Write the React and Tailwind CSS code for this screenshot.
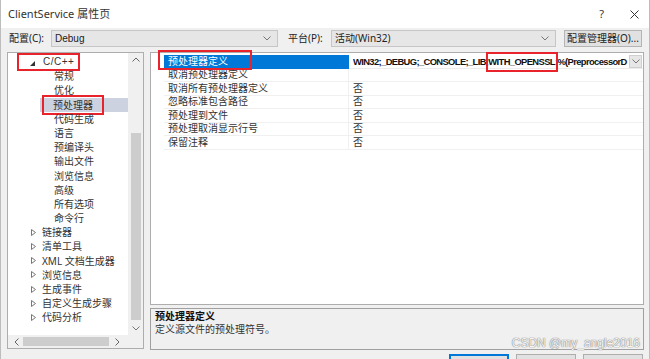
import React from 'react';

const treeChildren = ["常规", "优化", "预处理器", "代码生成", "语言", "预编译头", "输出文件", "浏览信息", "高级", "所有选项", "命令行"];
const treeTop = ["链接器", "清单工具", "XML 文档生成器", "浏览信息", "生成事件", "自定义生成步骤", "代码分析"];

const props = [
  ["取消预处理器定义", ""],
  ["取消所有预处理器定义", "否"],
  ["忽略标准包含路径", "否"],
  ["预处理到文件", "否"],
  ["预处理取消显示行号", "否"],
  ["保留注释", "否"],
];

function Chevron({ className }) {
  return (
    <svg width="8" height="5" viewBox="0 0 8 5" className={className}>
      <path d="M0.5 0.5 L4 4 L7.5 0.5" fill="none" stroke="#777" strokeWidth="1" />
    </svg>
  );
}

export default function App() {
  return (
    <div className="relative w-[650px] h-[359px] overflow-hidden bg-[#f0f0f0] border-x border-[#bdbdbd] text-[#222] font-['Noto_Sans','Noto_Sans_CJK_SC',sans-serif]">
      {/* 标题栏 */}
      <div className="h-[28px] bg-white flex items-center pl-[7px] pr-[10px] text-[11px] text-[#333]">
        <span>ClientService 属性页</span>
        <span className="ml-auto mr-[26px] text-[11px] text-[#333]">?</span>
        <svg width="9" height="9" viewBox="0 0 9 9">
          <path d="M0.5 0.5 L8.5 8.5 M8.5 0.5 L0.5 8.5" stroke="#333" strokeWidth="1" />
        </svg>
      </div>

      {/* 配置行 */}
      <div className="mt-[2px] h-[17px] flex items-center pl-[8px] text-[10px]">
        <span className="w-[42px]">配置(C):</span>
        <div className="w-[227px] h-[17px] bg-[#e6e6e6] border border-[#c6c6c6] flex items-center pl-[3px] pr-[6px]">
          <span className="font-['Liberation_Sans'] text-[10px]">Debug</span>
          <Chevron className="ml-auto" />
        </div>
        <span className="ml-[10px] w-[43px]">平台(P):</span>
        <div className="w-[225px] h-[17px] bg-[#e6e6e6] border border-[#c6c6c6] flex items-center pl-[3px] pr-[6px]">
          <span>活动(Win32)</span>
          <Chevron className="ml-auto" />
        </div>
        <div className="ml-[8px] w-[78px] h-[17px] bg-[#e1e1e1] border border-[#b4b4b4] flex items-center justify-center">
          配置管理器(O)...
        </div>
      </div>

      {/* 主体 */}
      <div className="mt-[5px] flex pl-[6px] gap-[6px]">
        {/* 左侧树 */}
        <div className="w-[137px] h-[297px] bg-white border border-[#adadad] flex flex-col">
          <div className="flex flex-1 min-h-0">
            <div className="flex-1 pt-[2px] text-[10px] leading-[14.2px] text-[#333]">
              <div className="h-[14.2px] flex items-center">
                <div className="relative ml-[9px] w-[63px] flex items-center pl-[24px] h-[18px] border-2 border-[#e8232b]">
                  <svg width="5" height="5" viewBox="0 0 5 5" className="absolute left-[11px] top-[6px]">
                    <path d="M5 0 L5 5 L0 5 Z" fill="#333" />
                  </svg>
                  <span className="font-['Liberation_Sans'] text-[10px] tracking-[0.5px]">C/C++</span>
                </div>
              </div>
              {treeChildren.map((t) =>
                t === "预处理器" ? (
                  <div key={t} className="h-[14.2px] ml-[32px] bg-[#cdd2e0] flex items-center">
                    <div className="ml-[2px] h-[20px] flex items-center px-[9px] border-2 border-[#e8232b]">{t}</div>
                  </div>
                ) : (
                  <div key={t} className="h-[14.2px] pl-[46px] whitespace-nowrap">{t}</div>
                )
              )}
              {treeTop.map((t, i) => (
                <div key={t + i} className="h-[14.2px] flex items-center pl-[23px] whitespace-nowrap">
                  <svg width="5" height="7" viewBox="0 0 5 7" className="mr-[6px]">
                    <path d="M0.5 0.5 L4.5 3.5 L0.5 6.5 Z" fill="none" stroke="#777" strokeWidth="1" />
                  </svg>
                  <span>{t}</span>
                </div>
              ))}
            </div>
            {/* 竖滚动条 */}
            <div className="w-[15px] bg-[#f0f0f0] flex flex-col items-center pt-[4px] pb-[4px]">
              <svg width="8" height="5" viewBox="0 0 8 5">
                <path d="M0.5 4.5 L4 1 L7.5 4.5" fill="none" stroke="#666" strokeWidth="1" />
              </svg>
              <div className="flex-1" />
              <div className="w-[10px] h-[187px] bg-[#cdcdcd] mb-[6px]" />
              <Chevron />
            </div>
          </div>
          {/* 横滚动条 */}
          <div className="h-[13px] flex">
            <div className="flex-1 bg-[#f0f0f0] flex items-center pl-[6px] pr-[8px]">
              <svg width="5" height="8" viewBox="0 0 5 8">
                <path d="M4.5 0.5 L1 4 L4.5 7.5" fill="none" stroke="#666" strokeWidth="1" />
              </svg>
              <div className="ml-[4px] w-[86px] h-[9px] bg-[#cdcdcd]" />
              <svg width="5" height="8" viewBox="0 0 5 8" className="ml-auto">
                <path d="M0.5 0.5 L4 4 L0.5 7.5" fill="none" stroke="#666" strokeWidth="1" />
              </svg>
            </div>
            <div className="w-[15px] bg-[#f0f0f0]" />
          </div>
        </div>

        {/* 右侧属性网格 */}
        <div className="w-[494px] flex flex-col">
          <div className="h-[253px] bg-white border border-[#adadad] text-[10px] text-[#333]">
            <div className="flex h-[13.5px] mt-[2px]">
              <div className="w-[13px]" />
              <div className="relative w-[185px] bg-[#0078d7] text-white flex items-center pl-[4px]">
                <span>预处理器定义</span>
                <div className="absolute left-[-6px] top-[-5px] w-[94px] h-[20px] border-2 border-[#e8232b]" />
              </div>
              <div className="relative flex-1 flex items-center pl-[4px] border-b border-[#ececec]">
                <div className="w-[277px] overflow-hidden">
                  <span className="whitespace-nowrap font-['Liberation_Sans'] font-bold text-[9.4px] tracking-[-0.62px] text-[#111]">
                    WIN32;_DEBUG;_CONSOLE;_LIB;WITH_OPENSSL;%(PreprocessorD
                  </span>
                </div>
                <div className="absolute left-[137px] top-[-3px] w-[72px] h-[20px] border-2 border-[#e8232b]" />
                <div className="absolute right-[1px] top-0 w-[13px] h-[13px] bg-[#e6e6e6] border border-[#cfcfcf] flex items-center justify-center">
                  <Chevron />
                </div>
              </div>
            </div>
            {props.map(([name, val]) => (
              <div key={name} className="flex h-[13.5px]">
                <div className="w-[13px]" />
                <div className="w-[185px] flex items-center pl-[4px] border-b border-r border-[#f0f0f0]">{name}</div>
                <div className="flex-1 flex items-center pl-[4px] border-b border-[#f0f0f0]">{val}</div>
              </div>
            ))}
          </div>
          <div className="mt-[3px] h-[42px] border border-[#a0a0a0] bg-[#f0f0f0] px-[4px] pt-[1px] text-[10px] leading-[13px]">
            <div className="font-bold text-[#111]">预处理器定义</div>
            <div className="text-[#333]">定义源文件的预处理符号。</div>
          </div>
        </div>
      </div>

      {/* 底部按钮 */}
      <div className="mt-[4px] flex justify-end pr-[6px] gap-[7px]">
        <div className="w-[60px] h-[20px] bg-[#e1e1e1] border-2 border-[#0078d7]" />
        <div className="w-[60px] h-[20px] bg-[#e1e1e1] border border-[#adadad]" />
        <div className="w-[60px] h-[20px] bg-[#e1e1e1] border border-[#adadad]" />
      </div>

      {/* 水印 */}
      <div className="absolute right-[9px] top-[334px] text-[12px] font-['Liberation_Sans'] text-[#f4f4f4] [text-shadow:0_0_1px_#777,0_0_1px_#777]">
        CSDN @my_angle2016
      </div>
    </div>
  );
}
